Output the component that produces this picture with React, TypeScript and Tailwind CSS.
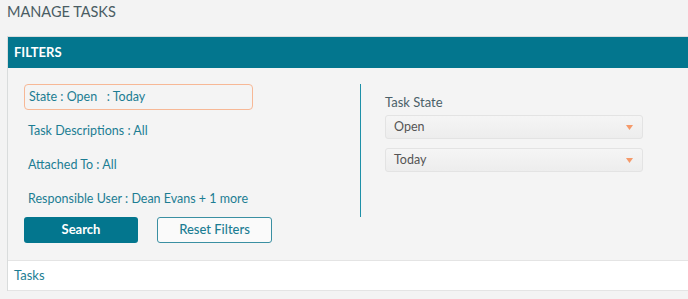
import React from "react";

const FILTER_ROWS = [
  { id: 0, label: "State : Open\u00a0\u00a0 : Today", active: true },
  { id: 1, label: "Task Descriptions : All", active: false },
  { id: 2, label: "Attached To : All", active: false },
  { id: 3, label: "Responsible User : Dean Evans + 1 more", active: false },
];

function Caret() {
  return (
    <svg width="7" height="5" viewBox="0 0 7 5" className="shrink-0">
      <polygon points="0,0 7,0 3.5,5" fill="#f59a6a" />
    </svg>
  );
}

function Select({ value }: { value: string }) {
  return (
    <div className="flex h-[24px] w-[258px] items-center justify-between rounded-[3px] border border-[#e3e3e3] bg-gradient-to-b from-[#f5f5f5] to-[#ededed] pl-[8px] pr-[9px] text-[12.5px] text-[#555]">
      <span>{value}</span>
      <Caret />
    </div>
  );
}

export default function App() {
  return (
    <div
      className="h-[299px] w-full overflow-hidden bg-[#f3f3f3]"
      style={{ fontFamily: "Lato, 'Open Sans', sans-serif" }}
    >
      <h1 className="pl-[7px] pt-[3px] text-[14.5px] leading-[18px] text-[#4a5c63]">
        MANAGE TASKS
      </h1>

      <div className="mt-[15px] ml-[7px] border-t border-l border-[#d9dcdc]">
        <div className="flex h-[31px] items-center bg-[#03768e] px-[6px] text-[13px] font-bold text-white">
          FILTERS
        </div>

        <div className="flex flex-col bg-[#f4f4f4] pt-[16px] pb-[17px]">
          <div className="flex">
            <div className="flex w-[353px] flex-col gap-[8px] border-r border-[#1e90a8] pl-[16px] pb-[5px]">
              {FILTER_ROWS.map((row) => (
                <div
                  key={row.id}
                  className={
                    row.active
                      ? "flex h-[26px] w-[229px] items-center rounded-[4px] border border-[#f7b896] pl-[4px] text-[12.5px] text-[#1c7d93]"
                      : "flex h-[26px] items-center pl-[4px] text-[12.5px] text-[#1c7d93]"
                  }
                >
                  {row.label}
                </div>
              ))}
            </div>

            <div className="flex flex-col pl-[24px] pt-[10px]">
              <div className="mb-[5px] text-[13px] leading-[16px] text-[#4a6068]">
                Task State
              </div>
              <div className="flex flex-col gap-[9px]">
                <Select value="Open" />
                <Select value="Today" />
              </div>
            </div>
          </div>

          <div className="flex gap-[19px] pl-[16px]">
            <button className="h-[26px] w-[114px] rounded-[3px] bg-[#03768e] text-[13px] font-bold text-white">
              Search
            </button>
            <button className="h-[26px] w-[115px] rounded-[3px] border border-[#3a8fa2] bg-[#fafafa] text-[13px] font-medium text-[#1c7d93]">
              Reset Filters
            </button>
          </div>
        </div>

        <div className="flex h-[31px] items-center border-y border-[#e4e4e4] bg-white pl-[6px] text-[13px] text-[#1c7d93]">
          Tasks
        </div>
      </div>
    </div>
  );
}
